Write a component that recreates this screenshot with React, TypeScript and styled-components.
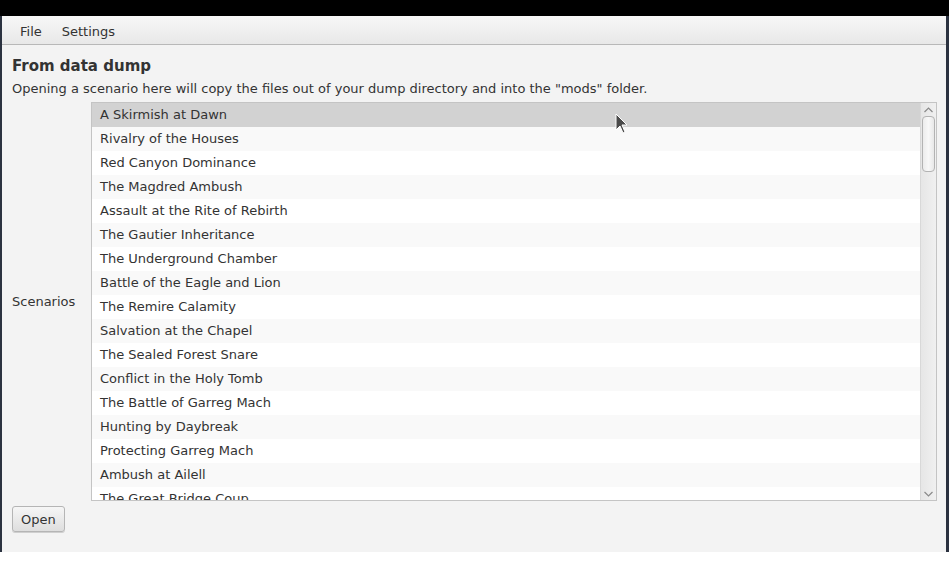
import React from "react";
import styled, { createGlobalStyle } from "styled-components";

const Global = createGlobalStyle`
  html, body { margin: 0; padding: 0; background: #ffffff; }
  body { font-family: "DejaVu Sans", "Liberation Sans", sans-serif; }
  * { box-sizing: border-box; }
`;

const TopBand = styled.div`
  height: 16px;
  background: #000000;
`;

const Frame = styled.div`
  display: flex;
  height: 536px;
  background: #2b3240;
  padding: 0 3px 0 2px;
`;

const Window = styled.div`
  flex: 1;
  display: flex;
  flex-direction: column;
  background: #f3f3f3;
  color: #333333;
  font-size: 13px;
  position: relative;
`;

const MenuBar = styled.div`
  height: 29px;
  display: flex;
  align-items: center;
  padding: 2px 0 0 8px;
  background: linear-gradient(#f7f7f7, #e8e8e8);
  border-bottom: 1px solid #b8b8b8;
`;

const MenuItem = styled.span`
  padding: 0 10px;
  color: #333333;
`;

const Content = styled.div`
  flex: 1;
  display: flex;
  flex-direction: column;
  padding: 12px 9px 0 10px;
`;

const Title = styled.div`
  font-weight: bold;
  font-size: 15px;
  line-height: 18px;
  color: #333333;
`;

const Desc = styled.div`
  margin-top: 6px;
  line-height: 16px;
`;

const Form = styled.div`
  display: grid;
  grid-template-columns: 79px 1fr;
  align-items: center;
  margin-top: 5px;
`;

const FieldLabel = styled.div``;

const ListBox = styled.div`
  height: 399px;
  border: 1px solid #c4c4c4;
  background: #ffffff;
  display: flex;
  overflow: hidden;
`;

const Rows = styled.div`
  flex: 1;
  overflow: hidden;
`;

const Row = styled.div<{ $odd: boolean; $selected: boolean }>`
  height: 24px;
  line-height: 24px;
  padding-left: 8px;
  white-space: nowrap;
  color: #333333;
  background: ${(p) => (p.$selected ? "#d2d2d2" : p.$odd ? "#f9f9f9" : "#ffffff")};
`;

const ScrollBar = styled.div`
  width: 16px;
  display: flex;
  flex-direction: column;
  align-items: center;
  background: linear-gradient(90deg, #e6e6e6, #f0f0f0);
  border-left: 1px solid #d8d8d8;
`;

const ArrowBox = styled.div`
  height: 13px;
  width: 100%;
  display: flex;
  align-items: center;
  justify-content: center;
`;

const Thumb = styled.div`
  width: 13px;
  height: 56px;
  border: 1px solid #b3b3b3;
  border-radius: 4px;
  background: linear-gradient(90deg, #ececec, #f8f8f8 50%, #e8e8e8);
`;

const Track = styled.div`
  flex: 1;
`;

const ButtonRow = styled.div`
  margin-top: 5px;
`;

const Button = styled.button`
  height: 26px;
  padding: 0 8px;
  font-family: "DejaVu Sans", "Liberation Sans", sans-serif;
  font-size: 13px;
  color: #333333;
  border: 1px solid #b5b5b5;
  border-radius: 3px;
  background: linear-gradient(#f6f6f6, #dedede);
  box-shadow: 0 1px 0 #cfcfcf;
`;

const Cursor = styled.svg`
  position: absolute;
  left: 613px;
  top: 97px;
`;

const scenarios = [
  "A Skirmish at Dawn",
  "Rivalry of the Houses",
  "Red Canyon Dominance",
  "The Magdred Ambush",
  "Assault at the Rite of Rebirth",
  "The Gautier Inheritance",
  "The Underground Chamber",
  "Battle of the Eagle and Lion",
  "The Remire Calamity",
  "Salvation at the Chapel",
  "The Sealed Forest Snare",
  "Conflict in the Holy Tomb",
  "The Battle of Garreg Mach",
  "Hunting by Daybreak",
  "Protecting Garreg Mach",
  "Ambush at Ailell",
  "The Great Bridge Coup",
];

const Chevron = ({ up }: { up: boolean }) => (
  <svg width="9" height="6" viewBox="0 0 9 6">
    <path
      d={up ? "M0.5 5 L4.5 1 L8.5 5" : "M0.5 1 L4.5 5 L8.5 1"}
      fill="none"
      stroke="#8a8a8a"
      strokeWidth="1.2"
    />
  </svg>
);

export default function App() {
  return (
    <>
      <Global />
      <TopBand />
      <Frame>
        <Window>
          <MenuBar>
            <MenuItem>File</MenuItem>
            <MenuItem>Settings</MenuItem>
          </MenuBar>
          <Content>
            <Title>From data dump</Title>
            <Desc>
              Opening a scenario here will copy the files out of your dump directory and into the "mods" folder.
            </Desc>
            <Form>
              <FieldLabel>Scenarios</FieldLabel>
              <ListBox>
                <Rows>
                  {scenarios.map((s, i) => (
                    <Row key={s} $odd={i % 2 === 1} $selected={i === 0}>
                      {s}
                    </Row>
                  ))}
                </Rows>
                <ScrollBar>
                  <ArrowBox>
                    <Chevron up />
                  </ArrowBox>
                  <Thumb />
                  <Track />
                  <ArrowBox>
                    <Chevron up={false} />
                  </ArrowBox>
                </ScrollBar>
              </ListBox>
            </Form>
            <ButtonRow>
              <Button>Open</Button>
            </ButtonRow>
          </Content>
          <Cursor width="14" height="22" viewBox="0 0 14 22">
            <path d="M1 1 L1 17 L5 13 L8 20 L10 19 L7 12 L12 12 Z" fill="#4a4a4a" stroke="#ffffff" strokeWidth="1" />
          </Cursor>
        </Window>
      </Frame>
    </>
  );
}
